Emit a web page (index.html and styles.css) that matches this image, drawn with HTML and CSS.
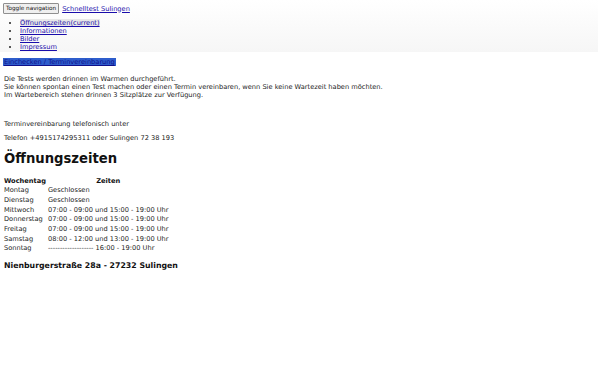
FILE: index.html
```html
<!DOCTYPE html>
<html lang="de">
<head>
    <meta charset="UTF-8">
    <meta name="viewport" content="width=device-width, initial-scale=1.0">
    <title>Schnelltest Sulingen</title>
    <link rel="stylesheet" href="styles.css">
</head>
<body>
    <nav class="navbar">
        <div class="navbar-header">
            <button type="button" class="toggle">Toggle navigation</button>
            <a class="brand" href="#">Schnelltest Sulingen</a>
        </div>
        <ul class="nav">
            <li class="active"><a href="#">Öffnungszeiten(current)</a></li>
            <li><a href="#">Informationen</a></li>
            <li><a href="#">Bilder</a></li>
            <li><a href="#">Impressum</a></li>
        </ul>
    </nav>

    <div class="content">
        <a class="btn" href="#">Einchecken / Terminvereinbarung</a>

        <p class="intro">
            Die Tests werden drinnen im Warmen durchgeführt.<br>
            Sie können spontan einen Test machen oder einen Termin vereinbaren, wenn Sie keine Wartezeit haben möchten.<br>
            Im Wartebereich stehen drinnen 3 Sitzplätze zur Verfügung.
        </p>

        <p class="phone">Terminvereinbarung telefonisch unter</p>
        <p>Telefon +4915174295311 oder Sulingen 72 38 193</p>

        <h1>Öffnungszeiten</h1>

        <table class="hours">
            <tr><th>Wochentag</th><th>Zeiten</th></tr>
            <tr><td>Montag</td><td>Geschlossen</td></tr>
            <tr><td>Dienstag</td><td>Geschlossen</td></tr>
            <tr><td>Mittwoch</td><td>07:00 - 09:00 und 15:00 - 19:00 Uhr</td></tr>
            <tr><td>Donnerstag</td><td>07:00 - 09:00 und 15:00 - 19:00 Uhr</td></tr>
            <tr><td>Freitag</td><td>07:00 - 09:00 und 15:00 - 19:00 Uhr</td></tr>
            <tr><td>Samstag</td><td>08:00 - 12:00 und 13:00 - 19:00 Uhr</td></tr>
            <tr><td>Sonntag</td><td>------------------- 16:00 - 19:00 Uhr</td></tr>
        </table>

        <h3>Nienburgerstraße 28a - 27232 Sulingen</h3>
    </div>
</body>
</html>
```

FILE: styles.css
```css
body {
    margin: 0;
    font-family: "DejaVu Sans", sans-serif;
    font-size: 6.65px;
    line-height: 8px;
    color: #222222;
    background-color: #FFFFFF;
}
a {
    color: #1a0dab;
}
.navbar {
    width: 598px;
    height: 52px;
    background-image: linear-gradient(to bottom, #FFFFFF 0, #F6F6F6 100%);
}
.navbar-header {
    padding: 3px 0 0 3px;
    display: flex;
    align-items: center;
    gap: 3px;
}
.toggle {
    font-family: "DejaVu Sans", sans-serif;
    font-size: 5.7px;
    line-height: 7px;
    padding: 1px 2px;
    margin: 0;
    border: 1px solid #8F8F8F;
    border-radius: 1px;
    background-color: #EFEFEF;
    color: #111111;
}
.nav {
    margin: 5px 0 0 0;
    padding-left: 20px;
}
.nav li.active a {
    background-color: #E7E7E7;
}
.content {
    padding: 6px 3px 0 4px;
}
.btn {
    display: inline-block;
    background-color: #2E5DCC;
    color: #10108A;
    padding: 0 1px;
    margin-left: -1px;
}
.intro {
    margin: 9px 0 0 0;
}
.phone {
    margin: 21px 0 0 0;
}
p {
    margin: 6px 0 0 0;
}
h1 {
    font-size: 13.2px;
    line-height: 16px;
    margin: 9px 0 10px 0;
    color: #111111;
}
.hours {
    border-collapse: collapse;
    margin-left: -1px;
}
.hours th, .hours td {
    padding: 0 1px;
    height: 9.7px;
    line-height: 9px;
}
.hours th {
    height: 9px;
    color: #111111;
}
.hours td {
    text-align: left;
}
h3 {
    font-size: 7.8px;
    line-height: 10px;
    margin: 7px 0 0 0;
    color: #111111;
}
```
